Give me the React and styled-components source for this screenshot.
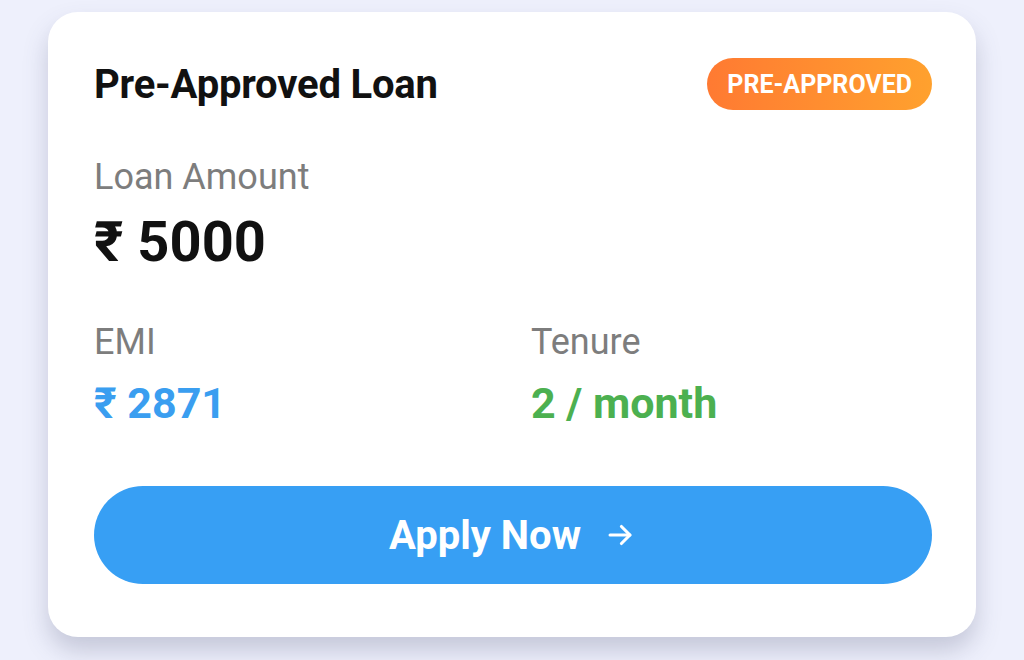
import styled, { createGlobalStyle } from 'styled-components';

const GlobalStyle = createGlobalStyle`
  html, body {
    margin: 0;
    padding: 0;
    background: #eef0fc;
    font-family: Roboto, "Noto Sans", "Liberation Sans", sans-serif;
  }
`;

const Page = styled.div`
  width: 1024px;
  height: 660px;
  padding-top: 12px;
  box-sizing: border-box;
  overflow: hidden;
`;

const Card = styled.div`
  width: 928px;
  margin-left: 48px;
  box-sizing: border-box;
  padding: 46px 44px 53px 46px;
  background: #ffffff;
  border-radius: 30px;
  box-shadow: 0 14px 24px rgba(80, 85, 120, 0.26);
`;

const Header = styled.div`
  display: flex;
  justify-content: space-between;
  align-items: center;
`;

const Title = styled.h2`
  margin: 0;
  font-size: 40px;
  font-weight: 700;
  color: #111111;
  letter-spacing: -0.2px;
`;

const Badge = styled.span`
  display: inline-flex;
  align-items: center;
  justify-content: center;
  height: 52px;
  padding: 0 20px;
  border-radius: 26px;
  background: linear-gradient(90deg, #ff7a32, #ffa12e);
  color: #ffffff;
  font-size: 25px;
  font-weight: 700;
`;

const Label = styled.div`
  font-size: 36px;
  line-height: 42px;
  color: #7d7d7d;
  margin-top: ${(p) => p.$top || 0}px;
`;

const Amount = styled.div`
  font-size: 56px;
  line-height: 62px;
  font-weight: 700;
  color: #111111;
  margin-top: 13px;
`;

const Stats = styled.div`
  display: grid;
  grid-template-columns: 1fr 1fr;
  column-gap: 36px;
  margin-top: 48px;
`;

const Value = styled.div`
  font-size: 43px;
  line-height: 50px;
  font-weight: 700;
  color: ${(p) => p.$color};
  margin-top: 15px;
`;

const ApplyButton = styled.button`
  display: flex;
  align-items: center;
  justify-content: center;
  gap: 22px;
  width: 100%;
  height: 98px;
  margin-top: 58px;
  border: none;
  border-radius: 49px;
  background: #379ff4;
  color: #ffffff;
  font-family: inherit;
  font-size: 40px;
  font-weight: 700;
  cursor: pointer;
`;

const Arrow = () => (
  <svg width="34" height="34" viewBox="0 0 24 24" fill="none" stroke="#fff" strokeWidth="2.2" strokeLinecap="round" strokeLinejoin="round">
    <path d="M5 12h14" />
    <path d="M13 6l6 6-6 6" />
  </svg>
);

export default function App() {
  return (
    <>
      <GlobalStyle />
      <Page>
        <Card>
          <Header>
            <Title>Pre-Approved Loan</Title>
            <Badge>PRE-APPROVED</Badge>
          </Header>
          <Label $top={46}>Loan Amount</Label>
          <Amount>₹ 5000</Amount>
          <Stats>
            <div>
              <Label>EMI</Label>
              <Value $color="#3a9ef0">₹ 2871</Value>
            </div>
            <div>
              <Label>Tenure</Label>
              <Value $color="#4cb050">2 / month</Value>
            </div>
          </Stats>
          <ApplyButton>
            Apply Now
            <Arrow />
          </ApplyButton>
        </Card>
      </Page>
    </>
  );
}
